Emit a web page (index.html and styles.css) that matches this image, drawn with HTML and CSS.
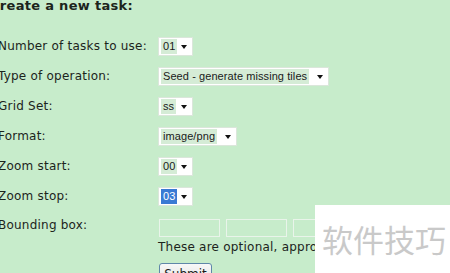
FILE: index.html
```html
<!DOCTYPE html>
<html>
<head>
<meta charset="utf-8">
<link rel="stylesheet" href="styles.css">
</head>
<body>
<div class="page">
  <h3 class="title">Create a new task:</h3>
  <div class="form">
    <div class="label">Number of tasks to use:</div>
    <div class="field"><div class="select w35"><span class="value">01</span><span class="arrow"></span></div></div>

    <div class="label">Type of operation:</div>
    <div class="field"><div class="select"><span class="value">Seed - generate missing tiles</span><span class="arrow"></span></div></div>

    <div class="label">Grid Set:</div>
    <div class="field"><div class="select w35"><span class="value">ss</span><span class="arrow"></span></div></div>

    <div class="label">Format:</div>
    <div class="field"><div class="select"><span class="value">image/png</span><span class="arrow"></span></div></div>

    <div class="label">Zoom start:</div>
    <div class="field"><div class="select w35"><span class="value">00</span><span class="arrow"></span></div></div>

    <div class="label">Zoom stop:</div>
    <div class="field"><div class="select w35 focused"><span class="value selected">03</span><span class="arrow"></span></div></div>

    <div class="label label-top">Bounding box:</div>
    <div class="field field-top">
      <div class="bbox">
        <span class="box"></span><span class="box"></span><span class="box"></span><span class="box"></span>
      </div>
      <div class="note">These are optional, approximate values are fine.</div>
      <button class="submit" type="button">Submit</button>
    </div>
  </div>
</div>
<div class="watermark">软件技巧</div>
</body>
</html>
```
FILE: styles.css
```css
html, body {
  margin: 0;
  padding: 0;
  background: #c7eccb;
  overflow: hidden;
}
body {
  width: 450px;
  height: 273px;
  position: relative;
  font-family: "DejaVu Sans", Verdana, sans-serif;
  font-size: 12px;
  color: #1c241c;
}
.page {
  margin-left: -2px;
}
.title {
  margin: -2px 0 17px -8px;
  font-size: 13px;
  line-height: 16px;
  font-weight: bold;
  letter-spacing: 0.3px;
  white-space: nowrap;
}
.form {
  display: grid;
  grid-template-columns: 160px auto;
  grid-auto-rows: 30px;
  align-items: center;
}
.label {
  line-height: 16px;
  letter-spacing: 0.22px;
  white-space: nowrap;
}
.field {
  display: flex;
  align-items: center;
}
.select {
  display: inline-flex;
  align-items: center;
  box-sizing: border-box;
  height: 19px;
  background: #ffffff;
  border: 1px solid #dbe6db;
  padding: 0 0 0 2px;
  font-family: "Liberation Sans", Arial, sans-serif;
  font-size: 11px;
  letter-spacing: 0.08px;
  color: #1a1a1a;
}
.value {
  background: #d5ecd6;
  line-height: 15px;
  padding: 0 2px 0 2px;
  white-space: nowrap;
}
.value.selected {
  background: #3a7ad4;
  color: #ffffff;
}
.arrow {
  width: 0;
  height: 0;
  border-left: 3.5px solid transparent;
  border-right: 3.5px solid transparent;
  border-top: 4px solid #111;
  margin: 1px 5px 0 8px;
}
.w35 {
  width: 35px;
}
.w35 .arrow {
  margin-left: auto;
}
.label-top {
  align-self: start;
  padding-top: 6px;
}
.field-top {
  align-self: start;
  flex-direction: column;
  align-items: flex-start;
  padding-top: 8px;
  padding-left: 1px;
}
.bbox {
  display: flex;
  gap: 6px;
}
.box {
  display: block;
  box-sizing: border-box;
  width: 61px;
  height: 18px;
  border: 1px solid #e9f4ea;
}
.note {
  margin-top: 3px;
  line-height: 15px;
  letter-spacing: 0.22px;
  white-space: nowrap;
  margin-left: -1px;
}
.submit {
  margin-top: 8px;
  box-sizing: border-box;
  width: 53px;
  height: 21px;
  padding: 0;
  font-family: "DejaVu Sans", Verdana, sans-serif;
  font-size: 12px;
  color: #1a1a1a;
  background: linear-gradient(#f8f8f8, #e2e2e2);
  border: 1px solid #5f87a9;
  border-radius: 3px;
}
.watermark {
  position: absolute;
  left: 315px;
  top: 205px;
  width: 135px;
  height: 68px;
  background: #ffffff;
  box-sizing: border-box;
  padding: 17px 0 0 7px;
  font-family: "Noto Sans CJK SC", sans-serif;
  font-size: 31px;
  line-height: 34px;
  color: #c9c9c9;
  white-space: nowrap;
}
```
